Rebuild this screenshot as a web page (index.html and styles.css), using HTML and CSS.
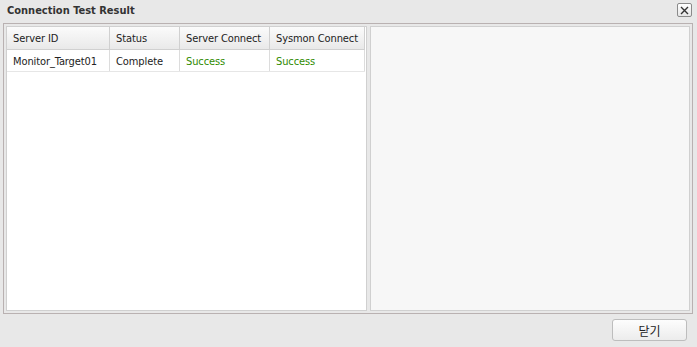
FILE: index.html
```html
<!DOCTYPE html>
<html>
<head>
<meta charset="utf-8">
<link rel="stylesheet" href="styles.css">
</head>
<body>
<div class="dialog">
  <div class="titlebar">
    <span class="title">Connection Test Result</span>
    <span class="close"><svg width="11" height="11" viewBox="0 0 11 11"><path d="M2 2 L9 9 M9 2 L2 9" stroke="#333" stroke-width="1.4"/></svg></span>
  </div>
  <div class="panel">
    <div class="grid">
      <div class="row head">
        <div class="c c1">Server ID</div>
        <div class="c c2">Status</div>
        <div class="c c3">Server Connect</div>
        <div class="c c4">Sysmon Connect</div>
      </div>
      <div class="row data">
        <div class="c c1">Monitor_Target01</div>
        <div class="c c2">Complete</div>
        <div class="c c3 ok">Success</div>
        <div class="c c4 ok">Success</div>
      </div>
    </div>
    <div class="side"></div>
  </div>
  <div class="footer">
    <button class="btn">닫기</button>
  </div>
</div>
</body>
</html>
```
FILE: styles.css
```css
html, body { margin: 0; padding: 0; }
body {
  background: #e8e8e8;
  font-family: "DejaVu Sans Condensed", "DejaVu Sans", "Noto Sans CJK KR", sans-serif;
  font-size: 11px;
  color: #222;
  width: 697px;
  height: 347px;
  overflow: hidden;
}
.dialog { display: flex; flex-direction: column; height: 347px; }
.titlebar {
  height: 23px;
  display: flex;
  align-items: center;
  justify-content: space-between;
  padding: 0 5px 0 7px;
  box-sizing: border-box;
}
.title { font-weight: bold; font-size: 11px; color: #333; margin-top: -2px; }
.close {
  width: 13px; height: 12px;
  border: 1px solid #8a8a8a;
  border-radius: 2px;
  background: linear-gradient(#fff, #e6e6e6);
  display: flex; align-items: center; justify-content: center;
  margin-top: -3px;
}
.panel {
  margin: 0 4px 0 3px;
  height: 291px;
  box-sizing: border-box;
  border: 1px solid #b9b1b1;
  padding: 2px;
  display: flex;
  gap: 3px;
}
.grid {
  width: 361px;
  box-sizing: border-box;
  border: 1px solid #d0d0d0;
  background: #fff;
}
.side {
  flex: 1;
  border: 1px solid #d0d0d0;
  background: #f7f7f7;
}
.row { display: flex; }
.head {
  height: 23px;
  background: linear-gradient(#fbfbfb, #e9e9e9);
  border-bottom: 1px solid #d0d0d0;
  box-sizing: border-box;
  width: 358px;
}
.data {
  height: 22px;
  border-bottom: 1px solid #e6e6e6;
  box-sizing: border-box;
  width: 358px;
}
.data .c { padding-top: 2px; }
.c {
  box-sizing: border-box;
  padding-left: 6px;
  display: flex;
  align-items: center;
  border-right: 1px solid #d0d0d0;
  white-space: nowrap;
  overflow: hidden;
  letter-spacing: -0.1px;
}
.data .c { border-right-color: #dcdcdc; }
.c1 { width: 103px; }
.c2 { width: 70px; }
.c3 { width: 90px; }
.c4 { width: 95px; }
.ok { color: #2f8a00; }
.footer {
  display: flex;
  justify-content: flex-end;
  padding: 5px 10px 0 0;
}
.btn {
  width: 75px; height: 22px;
  border: 1px solid #bdbdbd;
  border-radius: 3px;
  background: linear-gradient(#fdfdfd, #ececec);
  font-family: "Noto Sans CJK KR", sans-serif;
  font-size: 12px;
  color: #222;
  padding: 0;
}
```
